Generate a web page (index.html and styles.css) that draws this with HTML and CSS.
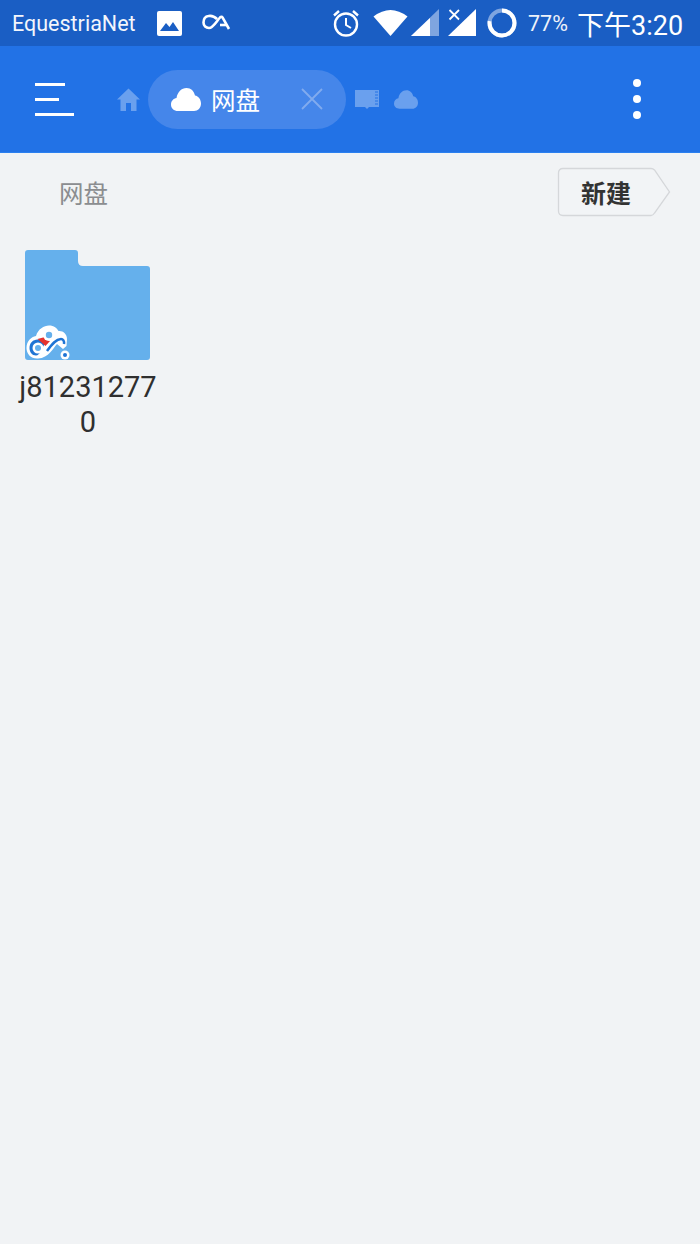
FILE: index.html
```html
<!DOCTYPE html>
<html lang="zh-CN">
<head>
  <meta charset="UTF-8" />
  <title>网盘</title>
  <link rel="stylesheet" href="styles.css">
</head>
<body>
  <div class="status-bar">
    <span class="carrier">EquestriaNet</span>
    <svg class="ic-image" width="25" height="25" viewBox="0 0 25 25">
      <rect width="25" height="25" rx="2" fill="#fff"/>
      <path d="M3 20 L9 12 L12.5 16 L16 11 L22 20 Z" fill="#1a5ec4"/>
    </svg>
    <svg class="ic-loop" width="29" height="18" viewBox="0 0 29 18">
      <path d="M15 5 C12 2 9 1.500 6.500 2 C3 2.500 1.500 5 1.500 8.500 C1.500 12 4 14 7 14 C11 14 14 8 18 3.500 C19 2.500 20 2.500 20.500 3.500 L27 15" fill="none" stroke="#fff" stroke-width="2.600"/>
      <path d="M18 11 L24 11" stroke="#fff" stroke-width="2.600"/>
    </svg>
    <div class="status-right">
      <svg class="ic-alarm" width="28" height="28" viewBox="0 0 28 28">
        <circle cx="14" cy="15.500" r="11" fill="none" stroke="#fff" stroke-width="2.400"/>
        <path d="M14 9 V16 L19 19" fill="none" stroke="#fff" stroke-width="2"/>
        <path d="M2 6.500 L7 2 M26 6.500 L21 2" stroke="#fff" stroke-width="2.400"/>
      </svg>
      <svg class="ic-wifi" width="35" height="28" viewBox="0 0 35 28">
        <path d="M0.500 7.500 Q17.500 -5.500 34.500 7.500 L17.500 27 Z" fill="#fff"/>
      </svg>
      <svg class="ic-signal" width="28" height="28" viewBox="0 0 28 28">
        <path d="M0 27 L28 0 V27 Z" fill="#7fa5e0"/>
        <path d="M0 27 L19 9 V27 Z" fill="#fff"/>
      </svg>
      <svg class="ic-signal-x" width="28" height="28" viewBox="0 0 28 28">
        <path d="M0 27 L28 0 V27 Z" fill="#fff"/>
        <path d="M1.500 1 L11 10.500 M11 1 L1.500 10.500" stroke="#fff" stroke-width="1.800"/>
      </svg>
      <svg class="ic-battery" width="30" height="30" viewBox="0 0 30 30">
        <circle cx="15" cy="15" r="12.500" fill="none" stroke="#7fa5e0" stroke-width="4"/>
        <circle cx="15" cy="15" r="12.500" fill="none" stroke="#fff" stroke-width="4" stroke-dasharray="60.500 78.500" transform="rotate(-90 15 15)"/>
      </svg>
      <span class="battery-text">77%</span>
      <span class="clock">下午3:20</span>
    </div>
  </div>

  <header class="toolbar">
    <button class="menu-btn">
      <span class="menu-line one"></span>
      <span class="menu-line two"></span>
      <span class="menu-line three"></span>
    </button>
    <svg class="ic-home" width="23" height="23" viewBox="0 0 23 23">
      <path d="M11.500 0.500 L23 11.500 H19.500 V23 H14 V15 H9 V23 H3.500 V11.500 H0 Z" fill="#6aa0ee"/>
    </svg>
    <div class="tab-pill">
      <svg class="ic-cloud" width="30" height="23" viewBox="0 0 30 23">
        <path d="M7 23 C3 23 0 20.500 0 16.500 C0 13 2.500 10.500 5.500 10 C6.500 4 10.500 0 15.500 0 C20 0 23 3 24 7.500 C27.500 8 30 11.500 30 15.500 C30 20 27 23 23 23 Z" fill="#fff"/>
      </svg>
      <span class="tab-title">网盘</span>
      <svg class="ic-close" width="22" height="22" viewBox="0 0 22 22">
        <path d="M1 1 L21 21 M21 1 L1 21" stroke="#81abee" stroke-width="1.800"/>
      </svg>
    </div>
    <svg class="ic-sd" width="24" height="20" viewBox="0 0 24 20">
      <path d="M0 1 H24 V18 H14 L12 20 L10 18 H0 Z" fill="#6aa0ee"/>
      <path d="M20 3 H23 M20 6 H23 M20 9 H23 M20 12 H23 M20 15 H23" stroke="#2272e6" stroke-width="1"/>
    </svg>
    <svg class="ic-cloud-small" width="24" height="19" viewBox="0 0 30 23">
      <path d="M7 23 C3 23 0 20.500 0 16.500 C0 13 2.500 10.500 5.500 10 C6.500 4 10.500 0 15.500 0 C20 0 23 3 24 7.500 C27.500 8 30 11.500 30 15.500 C30 20 27 23 23 23 Z" fill="#6aa0ee"/>
    </svg>
    <button class="more-btn">
      <span class="dot"></span>
      <span class="dot"></span>
      <span class="dot"></span>
    </button>
  </header>

  <div class="path-row">
    <span class="path-name">网盘</span>
    <div class="new-btn">
      <svg class="new-shape" width="114" height="50" viewBox="0 0 114 50">
        <path d="M6 1.500 H94 Q96 1.500 97.500 3 L112.500 25 L97.500 46 Q96 48.500 94 48.500 H6 Q1.500 48.500 1.500 44 V6 Q1.500 1.500 6 1.500 Z" fill="#f2f4f6" stroke="#d5d7da" stroke-width="1.300"/>
      </svg>
      <span class="new-label">新建</span>
    </div>
  </div>

  <main class="file-grid">
    <div class="file-item">
      <div class="folder">
        <svg width="125" height="110" viewBox="0 0 125 110">
          <path d="M3 0 H50 Q53 0 53 3 V11 Q53 16 58 16 H122 Q125 16 125 19 V107 Q125 110 122 110 H3 Q0 110 0 107 V3 Q0 0 3 0 Z" fill="#65b0ec"/>
        </svg>
        <svg class="badge" width="46" height="36" viewBox="0 0 46 36">
          <path d="M1.500 24 C1.500 17 6 13 11 12 C13 5 19 1.500 24 1.500 C29 1.500 32 4 33.500 7 C38 6.500 42 10 42 15 L41.500 22 L38 25 L32 20 C28 24 24 34 13 34.500 C6 35 1.500 30 1.500 24 Z" fill="#fff"/>
          <path d="M4.500 24 C4.500 19 8 15.500 12.500 15.500 C16 15.500 18 17 20 19.500 C17 24 15 31.500 11 31.500 C7 31.500 4.500 28 4.500 24 Z" fill="#1f74d4"/>
          <path d="M12.500 15 L20 13 L25 17 L20.500 22 Z" fill="#e5322d"/>
          <circle cx="13" cy="24" r="5.500" fill="#fff"/>
          <circle cx="13" cy="24" r="3" fill="#65b0ec"/>
          <circle cx="24" cy="11" r="6" fill="#fff"/>
          <circle cx="24" cy="11" r="3.200" fill="#65b0ec"/>
          <path d="M22 27 C27 20 31 15 36 15 C38 15 39.500 17 39 20" fill="none" stroke="#1f74d4" stroke-width="2.500"/>
          <circle cx="40" cy="31" r="4.500" fill="#fff"/>
          <circle cx="40" cy="31" r="2" fill="#1f74d4"/>
        </svg>
      </div>
      <div class="file-name">j812312770</div>
    </div>
  </main>
</body>
</html>
```

FILE: styles.css
```css
* {
  margin: 0;
  padding: 0;
  box-sizing: border-box;
}

body {
  background-color: #f1f3f5;
  font-family: Roboto, "Noto Sans CJK SC", sans-serif;
  height: 1244px;
  overflow: hidden;
}

svg {
  display: block;
  flex-shrink: 0;
}

.status-bar {
  display: flex;
  align-items: center;
  height: 46px;
  padding: 0 16px 0 12px;
  background-color: #1a5ec4;
  color: #fff;
}

.carrier {
  font-size: 21.5px;
  width: 134px;
  white-space: nowrap;
  opacity: 0.95;
}

.ic-image {
  margin-left: 11px;
}

.ic-loop {
  margin-left: 20px;
}

.status-right {
  display: flex;
  align-items: center;
  margin-left: auto;
}

.ic-wifi {
  margin-left: 13px;
}

.ic-signal {
  margin-left: 3px;
}

.ic-signal-x {
  margin-left: 9px;
}

.ic-battery {
  margin-left: 11px;
}

.battery-text {
  font-size: 21.5px;
  margin-left: 11px;
  width: 42px;
  white-space: nowrap;
  opacity: 0.92;
}

.clock {
  font-size: 27px;
  margin-left: 7px;
  width: 107px;
  white-space: nowrap;
}

.toolbar {
  display: flex;
  align-items: center;
  height: 107px;
  padding: 0 0 0 35px;
  background-color: #2272e6;
  border-bottom: 1px solid #2b80f0;
}

.menu-btn,
.more-btn {
  display: flex;
  flex-direction: column;
  background: none;
  border: none;
}

.menu-btn {
  gap: 12px;
  width: 39px;
}

.menu-line {
  display: block;
  height: 3px;
  background-color: #fff;
}

.menu-line.one {
  width: 30px;
}

.menu-line.two {
  width: 24px;
}

.menu-line.three {
  width: 39px;
}

.ic-home {
  margin-left: 43px;
}

.tab-pill {
  display: flex;
  align-items: center;
  width: 198px;
  height: 59px;
  margin-left: 8px;
  padding-left: 23px;
  border-radius: 30px;
  background-color: #4586ea;
}

.tab-title {
  font-size: 24.5px;
  color: #fff;
  margin-left: 10px;
  width: 49px;
  white-space: nowrap;
}

.ic-close {
  margin-left: 41px;
}

.ic-sd {
  margin-left: 9px;
}

.ic-cloud-small {
  margin-left: 15px;
}

.more-btn {
  gap: 8px;
  margin-left: 215px;
}

.dot {
  display: block;
  width: 8px;
  height: 8px;
  border-radius: 50%;
  background-color: #fff;
}

.path-row {
  display: flex;
  align-items: center;
  justify-content: space-between;
  height: 78px;
  padding: 0 29px 0 59px;
}

.path-name {
  font-size: 24.5px;
  color: #8b8d90;
}

.new-btn {
  display: flex;
  align-items: center;
  position: relative;
  width: 114px;
  height: 50px;
}

.new-shape {
  position: absolute;
  top: 0;
  left: 0;
}

.new-label {
  position: relative;
  margin-left: 24px;
  font-size: 25px;
  font-weight: 700;
  color: #333;
}

.file-grid {
  display: grid;
  grid-template-columns: 140px;
  padding: 19px 0 0 18px;
}

.file-item {
  display: flex;
  flex-direction: column;
  align-items: center;
}

.folder {
  position: relative;
  width: 125px;
  height: 110px;
  margin-left: -1px;
}

.badge {
  position: absolute;
  left: 0;
  bottom: 0;
}

.file-name {
  width: 140px;
  margin-top: 10px;
  font-size: 29px;
  line-height: 35px;
  color: #2f2f2f;
  text-align: center;
  word-break: break-all;
}
```
